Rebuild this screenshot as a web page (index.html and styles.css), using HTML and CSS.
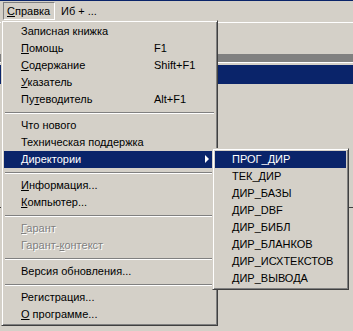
FILE: index.html
```html
<!DOCTYPE html>
<html>
<head>
<meta charset="utf-8">
<link rel="stylesheet" href="styles.css">
</head>
<body>
<div class="titlebar"></div>
<div class="menubar">
  <span class="mb-item active"><u>С</u>правка</span>
  <span class="mb-item">Иб + ...</span>
</div>
<div class="workspace">
  <div class="ws-line-white"></div>
  <div class="ws-band"></div>
  <div class="ws-line-white2"></div>
  <div class="ws-blue"></div>
  <div class="ws-dark"></div>
</div>

<div class="menu main-menu">
  <div class="item"><span class="label">Записная книжка</span></div>
  <div class="item"><span class="label"><u>П</u>омощь</span><span class="key">F1</span></div>
  <div class="item"><span class="label"><u>С</u>одержание</span><span class="key">Shift+F1</span></div>
  <div class="item"><span class="label"><u>У</u>казатель</span></div>
  <div class="item"><span class="label">Пу<u>т</u>еводитель</span><span class="key">Alt+F1</span></div>
  <div class="sep"></div>
  <div class="item"><span class="label">Что нового</span></div>
  <div class="item"><span class="label">Техническая поддержка</span></div>
  <div class="item selected"><span class="label">Директории</span><span class="arrow"></span></div>
  <div class="sep"></div>
  <div class="item"><span class="label"><u>И</u>нформация...</span></div>
  <div class="item"><span class="label"><u>К</u>омпьютер...</span></div>
  <div class="sep"></div>
  <div class="item disabled"><span class="label"><u>Г</u>арант</span></div>
  <div class="item disabled"><span class="label">Гарант-<u>к</u>онтекст</span></div>
  <div class="sep"></div>
  <div class="item"><span class="label">Версия обновления...</span></div>
  <div class="sep"></div>
  <div class="item"><span class="label">Регистрация...</span></div>
  <div class="item"><span class="label"><u>О</u> программе...</span></div>
</div>

<div class="menu sub-menu">
  <div class="item selected"><span class="label">ПРОГ_ДИР</span></div>
  <div class="item"><span class="label">ТЕК_ДИР</span></div>
  <div class="item"><span class="label">ДИР_БАЗЫ</span></div>
  <div class="item"><span class="label">ДИР_DBF</span></div>
  <div class="item"><span class="label">ДИР_БИБЛ</span></div>
  <div class="item"><span class="label">ДИР_БЛАНКОВ</span></div>
  <div class="item"><span class="label">ДИР_ИСХТЕКСТОВ</span></div>
  <div class="item"><span class="label">ДИР_ВЫВОДА</span></div>
</div>
</body>
</html>
```

FILE: styles.css
```css
html, body {
  margin: 0;
  padding: 0;
}
body {
  width: 353px;
  height: 331px;
  overflow: hidden;
  background: #d4d0c8;
  font-family: "Liberation Sans", Arial, sans-serif;
  font-size: 11px;
  color: #000;
  position: relative;
}
u {
  text-decoration: underline;
  text-underline-offset: 1px;
}
.titlebar {
  height: 1px;
  background: #0a246a;
}
.menubar {
  height: 19px;
  display: flex;
  align-items: flex-start;
  padding-left: 3px;
  padding-top: 1px;
  box-sizing: border-box;
}
.mb-item {
  height: 18px;
  line-height: 16px;
  padding: 0 5px 0 5px;
  border: 1px solid transparent;
  box-sizing: border-box;
  white-space: nowrap;
}
.mb-item.active {
  border-color: #808080 #ffffff #ffffff #808080;
  width: 52px;
  padding-left: 3px;
}
.workspace {
  padding-top: 2px;
}
.ws-line-white {
  height: 1px;
  background: #ffffff;
}
.ws-band {
  margin-top: 31px;
  height: 8px;
  background: #808080;
}
.ws-line-white2 {
  height: 1px;
  background: #ffffff;
}
.ws-blue {
  margin-top: 2px;
  height: 19px;
  background: #0a246a;
}
.ws-dark {
  margin-top: 123px;
  height: 1px;
  background: #404040;
}

.menu {
  position: absolute;
  background: #d4d0c8;
  box-sizing: border-box;
  border-style: solid;
  border-width: 1px;
  border-color: #d4d0c8 #404040 #404040 #d4d0c8;
  box-shadow: inset 1px 1px 0 #ffffff, inset -1px -1px 0 #808080;
  padding: 2px;
}
.main-menu {
  left: 1px;
  top: 20px;
  width: 217px;
  height: 306px;
}
.sub-menu {
  left: 212px;
  top: 148px;
  width: 137px;
  height: 142px;
}
.item {
  height: 17px;
  line-height: 17px;
  display: flex;
  align-items: center;
  padding-left: 17px;
  white-space: nowrap;
  position: relative;
}
.item .label {
  width: 133px;
  flex: none;
}
.sub-menu .item .label {
  width: auto;
}
.item .key {
  flex: none;
}
.item.selected {
  background: #0a246a;
  color: #ffffff;
}
.item.disabled {
  color: #808080;
  text-shadow: 1px 1px 0 #ffffff;
}
.arrow {
  position: absolute;
  left: 201px;
  top: 4px;
  width: 0;
  height: 0;
  border-left: 4px solid #ffffff;
  border-top: 4px solid transparent;
  border-bottom: 4px solid transparent;
}
.sep {
  height: 9px;
  display: flex;
  flex-direction: column;
  justify-content: center;
  padding: 0 1px;
}
.sep::before {
  content: "";
  display: block;
  height: 1px;
  background: #808080;
  border-bottom: 1px solid #ffffff;
}
```
